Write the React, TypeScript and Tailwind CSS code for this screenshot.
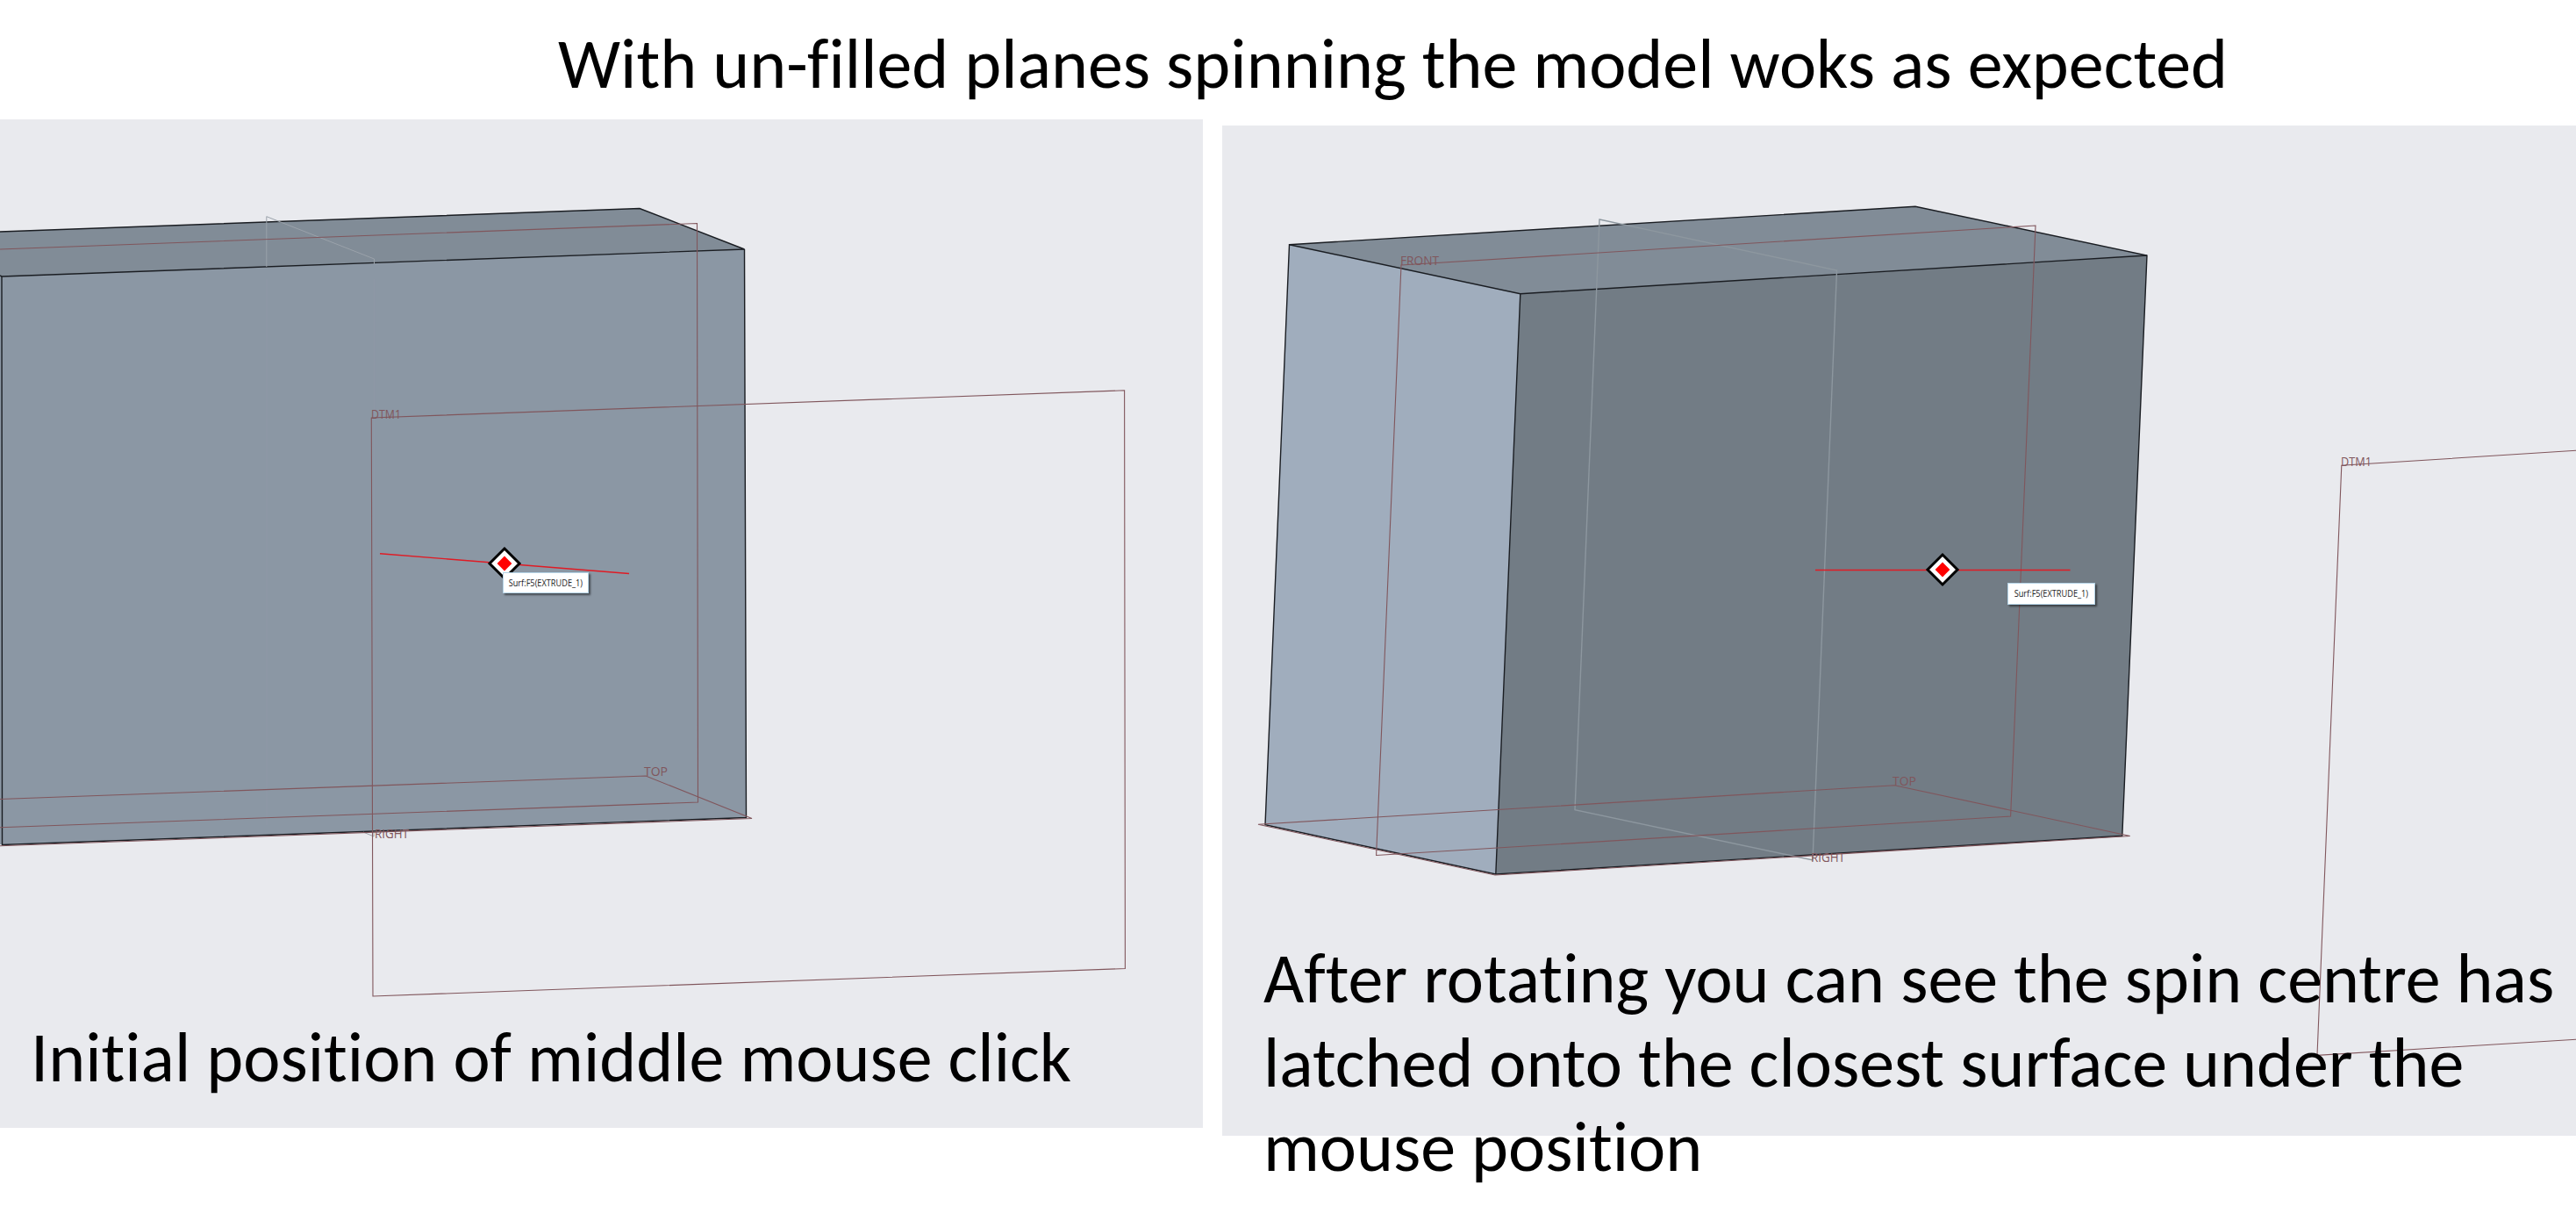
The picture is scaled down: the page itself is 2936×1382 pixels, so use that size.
import type { ReactNode } from "react";

const DATUM = "#80565c";
const EDGE = "#1a1d22";

function Viewport({
  viewBox,
  className,
  children,
}: {
  viewBox: string;
  className: string;
  children: ReactNode;
}) {
  return (
    <svg viewBox={viewBox} className={className} fill="none" strokeWidth="1.4">
      {children}
    </svg>
  );
}

function DatumLabel({ x, y, width, text }: { x: number; y: number; width: number; text: string }) {
  return (
    <text
      x={x}
      y={y}
      textLength={width}
      lengthAdjust="spacingAndGlyphs"
      fill={DATUM}
      stroke="none"
      className="font-['Open_Sans',sans-serif] text-[14px]"
    >
      {text}
    </text>
  );
}

function SpinCentre({ x, y }: { x: number; y: number }) {
  return (
    <g transform={`translate(${x} ${y})`}>
      <path d="M0 -17L17 0L0 17L-17 0Z" fill="#fff" stroke="#000" strokeWidth="3" />
      <path d="M0 -8.4L8.4 0L0 8.4L-8.4 0Z" fill="#f00" />
    </g>
  );
}

function SurfaceTip({ className }: { className: string }) {
  return (
    <div
      className={`absolute flex items-center justify-center border border-[#b4d3e6] bg-white font-['Open_Sans',sans-serif] text-[10px] leading-none whitespace-nowrap text-[#222] shadow-[2px_2px_2px_rgba(0,0,0,0.5)] ${className}`}
    >
      <span className="-mt-px scale-x-[0.92]">Surf:F5(EXTRUDE_1)</span>
    </div>
  );
}

export default function App() {
  return (
    <main className="h-[1382px] w-[2936px] overflow-hidden bg-white font-['Carlito','Open_Sans',sans-serif] text-[79.95px] leading-[96px] text-black [font-variant-ligatures:none]">
      <header className="h-[136px] pt-[25px] pl-[636px]">
        <h1 className="whitespace-nowrap">With un-filled planes spinning the model woks as expected</h1>
      </header>

      <div className="flex items-start gap-[22px]">
        <section className="relative h-[1149px] w-[1371px] shrink-0 bg-[#e9eaee] pt-[1021px] pl-[35px]">
          <Viewport viewBox="0 136 1371 1149" className="absolute inset-0 h-[1149px] w-[1371px]">
            <path d="M0 264L729 237.5L848.5 284L2 315L0 314Z" fill="#818c97" />
            <path d="M0 314L2 315L848.5 284L850.5 931.5L2.5 962.5L0 962Z" fill="#8b97a4" />
            <path d="M303.8 318V940M426.5 318V940" stroke="#8e98a5" />
            <g stroke={EDGE}>
              <path d="M0 264L729 237.5L848.5 284L2 315L0 314" />
              <path d="M2 315L2.5 962.5L850.5 931.5L848.5 284" />
            </g>
            <path d="M303.8 304V246.7L426.5 295V301M414 948L426 953V948" stroke="#9aa2aa" strokeWidth="1" />
            <g stroke={DATUM} strokeWidth="1.1">
              <path d="M0 284L794.5 254.5L795.5 914L0 942.7" />
              <path d="M0 910.5L736 884L857 932.5L0 963.8" />
              <path d="M423.3 476L1281.6 444.8L1282.4 1103.5L425 1135Z" />
            </g>
            <DatumLabel x={423} y={476.5} width={34} text="DTM1" />
            <DatumLabel x={734} y={884} width={27} text="TOP" />
            <DatumLabel x={427} y={954.5} width={39} text="RIGHT" />
            <path d="M433 630.7L717 653.5" stroke="#e01b24" />
            <SpinCentre x={575} y={642} />
          </Viewport>
          <SurfaceTip className="top-[516px] left-[573px] h-[24px] w-[98px]" />
          <p className="relative whitespace-nowrap">Initial position of middle mouse click</p>
        </section>

        <section className="relative mt-[7px] h-[1151px] w-[1543px] shrink-0 bg-[#e9eaee] pt-[924px] pl-[47px]">
          <Viewport viewBox="1393 143 1543 1151" className="absolute inset-0 h-[1151px] w-[1543px]">
            <path d="M1469.5 278.7L2183 235.3L2447 291L1732.8 334.7Z" fill="#818c97" />
            <path d="M1469.5 278.7L1732.8 334.7L1704.8 996L1442 939.7Z" fill="#a0adbd" />
            <path d="M1732.8 334.7L2447 291L2418.8 952.3L1704.8 996Z" fill="#727c85" />
            <g stroke={EDGE}>
              <path d="M1469.5 278.7L2183 235.3L2447 291L2418.8 952.3L1704.8 996L1442 939.7Z" />
              <path d="M1469.5 278.7L1732.8 334.7L2447 291M1732.8 334.7L1704.8 996" />
            </g>
            <path d="M1823 250L2093.5 308L2066 980L1795 922.7Z" stroke="#8d979f" />
            <g stroke={DATUM} strokeWidth="1.1">
              <path d="M1597 302L2320 257L2291.6 930L1568.6 974.5Z" />
              <path d="M1434 939.3L2159.4 894.7L2427.7 952.5L1704 997Z" />
              <path d="M2940 513L2668.8 530.3L2641 1202.3L2940 1184" />
            </g>
            <DatumLabel x={1596} y={302} width={44} text="FRONT" />
            <DatumLabel x={2157} y={895} width={27} text="TOP" />
            <DatumLabel x={2064} y={981.5} width={39} text="RIGHT" />
            <DatumLabel x={2668} y={530.5} width={35} text="DTM1" />
            <path d="M2069 649.5H2359.5" stroke="#e01b24" />
            <SpinCentre x={2214} y={649} />
          </Viewport>
          <SurfaceTip className="top-[521px] left-[895px] h-[25px] w-[100px]" />
          <p className="relative whitespace-nowrap">
            After rotating you can see the spin centre has
            <br />
            latched onto the closest surface under the
            <br />
            mouse position
          </p>
        </section>
      </div>
    </main>
  );
}
